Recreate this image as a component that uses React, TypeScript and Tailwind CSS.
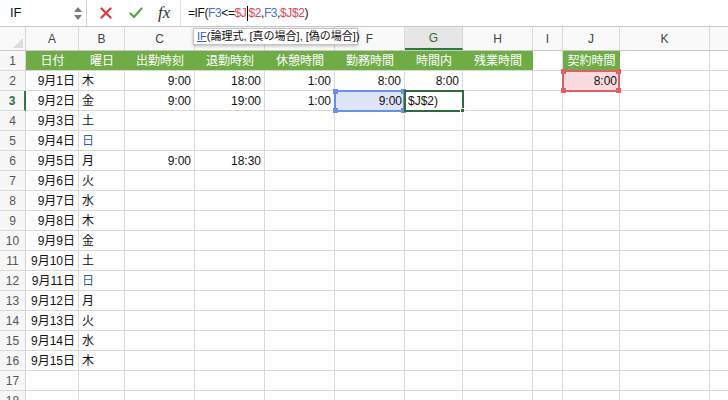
import * as React from "react"

const font = { fontFamily: '"Liberation Sans", "Noto Sans CJK JP", sans-serif' }

type Col = { key: string; w: string; label?: string }

const cols: Col[] = [
  { key: "A", w: "w-[53px]" },
  { key: "B", w: "w-[46px]" },
  { key: "C", w: "w-[70px]" },
  { key: "D", w: "w-[70px]" },
  { key: "E", w: "w-[70px]" },
  { key: "F", w: "w-[70px]" },
  { key: "G", w: "w-[58px]" },
  { key: "H", w: "w-[70px]" },
  { key: "I", w: "w-[30px]" },
  { key: "J", w: "w-[57px]" },
  { key: "K", w: "w-[90px]" },
  { key: "L", w: "w-[100px]", label: "" },
]

const headers: Record<string, string> = {
  A: "日付",
  B: "曜日",
  C: "出勤時刻",
  D: "退勤時刻",
  E: "休憩時間",
  F: "勤務時間",
  G: "時間内",
  H: "残業時間",
  J: "契約時間",
}

const days = ["木", "金", "土", "日", "月", "火", "水", "木", "金", "土", "日", "月", "火", "水", "木"]

const extra: Record<number, Record<string, string>> = {
  2: { C: "9:00", D: "18:00", E: "1:00", F: "8:00", G: "8:00", J: "8:00" },
  3: { C: "9:00", D: "19:00", E: "1:00", F: "9:00" },
  6: { C: "9:00", D: "18:30" },
}

function Handle({ className }: { className: string }) {
  return <span className={`absolute h-[5px] w-[5px] ${className}`} />
}

function Cell({ row, col }: { row: number; col: Col }) {
  const base = `relative h-full shrink-0 border-r border-b border-[#d9d9d9] ${col.w}`

  if (row === 1) {
    const h = headers[col.key]
    if (!h) return <div className={base} />
    return (
      <div className={`${col.w} relative flex h-full shrink-0 items-center justify-center border-b border-[#d9d9d9] bg-[#6fac46] text-[12px] text-white`}>
        {h}
      </div>
    )
  }

  let text = ""
  let align = "justify-end pr-[3px]"
  let color = "text-[#111]"
  const dayIdx = row - 2
  if (col.key === "A" && dayIdx < 15) text = `9月${dayIdx + 1}日`
  if (col.key === "B" && dayIdx < 15) {
    text = days[dayIdx]
    align = "justify-start pl-[3px]"
    if (text === "日") color = "text-[#2a5db0]"
  }
  if (extra[row]?.[col.key]) text = extra[row][col.key]

  // selection overlays
  if (row === 3 && col.key === "F") {
    return (
      <div className={base}>
        <div className="absolute -top-px -left-px z-10 flex h-[22px] w-[71px] items-center justify-end border-2 border-[#6a8fe6] bg-[#dee5f8] pr-[1px] text-[12px] text-[#111]">
          9:00
          <Handle className="-top-[3px] -left-[3px] bg-[#6a8fe6]" />
          <Handle className="-top-[3px] -right-[3px] bg-[#6a8fe6]" />
          <Handle className="-bottom-[3px] -left-[3px] bg-[#6a8fe6]" />
          <Handle className="-bottom-[3px] -right-[3px] bg-[#6a8fe6]" />
        </div>
      </div>
    )
  }
  if (row === 3 && col.key === "G") {
    return (
      <div className={base}>
        <div className="absolute -top-px -left-px z-20 flex h-[22px] w-[60px] items-center border-2 border-[#2e6b3b] bg-white pl-[2px] text-[12px] text-[#111]">
          $J$2)
          <span className="absolute -right-[3px] -bottom-[3px] h-[5px] w-[5px] border border-white bg-[#2e6b3b]" />
        </div>
      </div>
    )
  }
  if (row === 2 && col.key === "J") {
    return (
      <div className={base}>
        <div className="absolute -top-px -left-px z-10 flex h-[22px] w-[58px] items-center justify-end border-2 border-[#e35d66] bg-[#fadbdf] pr-[1px] text-[12px] text-[#111]">
          8:00
          <Handle className="-top-[3px] -left-[3px] bg-[#e35d66]" />
          <Handle className="-top-[3px] -right-[3px] bg-[#e35d66]" />
          <Handle className="-bottom-[3px] -left-[3px] bg-[#e35d66]" />
          <Handle className="-bottom-[3px] -right-[3px] bg-[#e35d66]" />
        </div>
      </div>
    )
  }

  return (
    <div className={`${base} flex items-center ${align} text-[12px] ${color}`}>
      <span className="whitespace-nowrap">{text}</span>
    </div>
  )
}

export default function App() {
  const rows = Array.from({ length: 18 }, (_, i) => i + 1)

  return (
    <div className="h-[400px] w-[728px] overflow-hidden bg-white" style={font}>
      {/* Formula bar */}
      <div className="flex h-[27px] items-stretch border-b border-[#c8c8c8]">
        <div className="flex w-[87px] shrink-0 items-center justify-between border-r border-[#d4d4d4] pr-[4px] pl-[10px]">
          <span className="text-[13px] text-[#111]">IF</span>
          <div className="flex flex-col items-center gap-[3px]">
            <svg width="8" height="5" viewBox="0 0 8 5"><path d="M4 0L8 5H0Z" fill="#7a7a7a" /></svg>
            <svg width="8" height="5" viewBox="0 0 8 5"><path d="M0 0H8L4 5Z" fill="#7a7a7a" /></svg>
          </div>
        </div>
        <div className="flex w-[94px] shrink-0 items-center border-r border-[#e2e2e2]">
          <svg className="ml-[13px]" width="12" height="12" viewBox="0 0 12 12">
            <path d="M1.5 1.5L10.5 10.5M10.5 1.5L1.5 10.5" stroke="#e0383e" strokeWidth="2.2" strokeLinecap="round" />
          </svg>
          <svg className="ml-[17px]" width="14" height="12" viewBox="0 0 14 12">
            <path d="M1.5 6.5L5 10L12.5 1.5" stroke="#53a548" strokeWidth="2.2" fill="none" strokeLinecap="round" strokeLinejoin="round" />
          </svg>
          <span className="ml-[15px] text-[17px] text-[#333] italic" style={{ fontFamily: '"Liberation Serif", serif' }}>
            fx
          </span>
        </div>
        <div className="flex items-center pl-[7px] text-[12px] tracking-[-0.4px] text-[#111]">
          <span>=IF(</span>
          <span className="text-[#3f6fe0]">F3</span>
          <span>&lt;=</span>
          <span className="text-[#e5474d]">$J</span>
          <span className="mx-[0.5px] inline-block h-[15px] w-px bg-black" />
          <span className="text-[#e5474d]">$2</span>
          <span>,</span>
          <span className="text-[#3f6fe0]">F3</span>
          <span>,</span>
          <span className="text-[#e5474d]">$J$2</span>
          <span>)</span>
        </div>
      </div>

      <div className="relative">
        {/* tooltip */}
        <div className="absolute top-[1px] left-[193px] z-30 flex h-[17px] w-[165px] items-center border border-[#c4c4c4] bg-white pl-[3px] text-[11px] whitespace-nowrap text-[#111] shadow-[0_1px_3px_rgba(0,0,0,0.25)]">
          <span className="text-[#2f5fd0] underline">IF</span>
          <span>(論理式, [真の場合], [偽の場合])</span>
        </div>

        {/* Column header row */}
        <div className="flex h-[24px] border-b border-[#c8c8c8] bg-[#f9f9f9]">
          <div className="relative w-[26px] shrink-0 border-r border-[#d4d4d4]">
            <svg className="absolute right-[2px] bottom-[2px]" width="10" height="10" viewBox="0 0 10 10">
              <path d="M10 0V10H0Z" fill="#dcdcdc" />
            </svg>
          </div>
          {cols.map((c) =>
            c.key === "G" ? (
              <div key={c.key} className={`${c.w} flex shrink-0 items-center justify-center border-r border-b-2 border-r-[#d4d4d4] border-b-[#2e7a3d] bg-[#e6e6e6] text-[12px] text-[#2e6b3b]`}>
                {c.key}
              </div>
            ) : (
              <div key={c.key} className={`${c.w} flex shrink-0 items-center justify-center border-r border-[#d9d9d9] text-[12px] text-[#444]`}>
                {c.label ?? c.key}
              </div>
            )
          )}
        </div>

        {/* Data rows */}
        {rows.map((r) => (
          <div key={r} className="flex h-[20px]">
            <div
              className={`flex w-[26px] shrink-0 items-center justify-center border-b border-[#d9d9d9] bg-[#f7f7f7] text-[12px] ${
                r === 3
                  ? "border-r-2 border-r-[#2e7a3d] bg-[#e6e6e6] font-bold text-[#2e6b3b]"
                  : "border-r border-r-[#d4d4d4] text-[#555]"
              }`}
            >
              {r}
            </div>
            {cols.map((c) => (
              <Cell key={c.key} row={r} col={c} />
            ))}
          </div>
        ))}
      </div>
    </div>
  )
}
